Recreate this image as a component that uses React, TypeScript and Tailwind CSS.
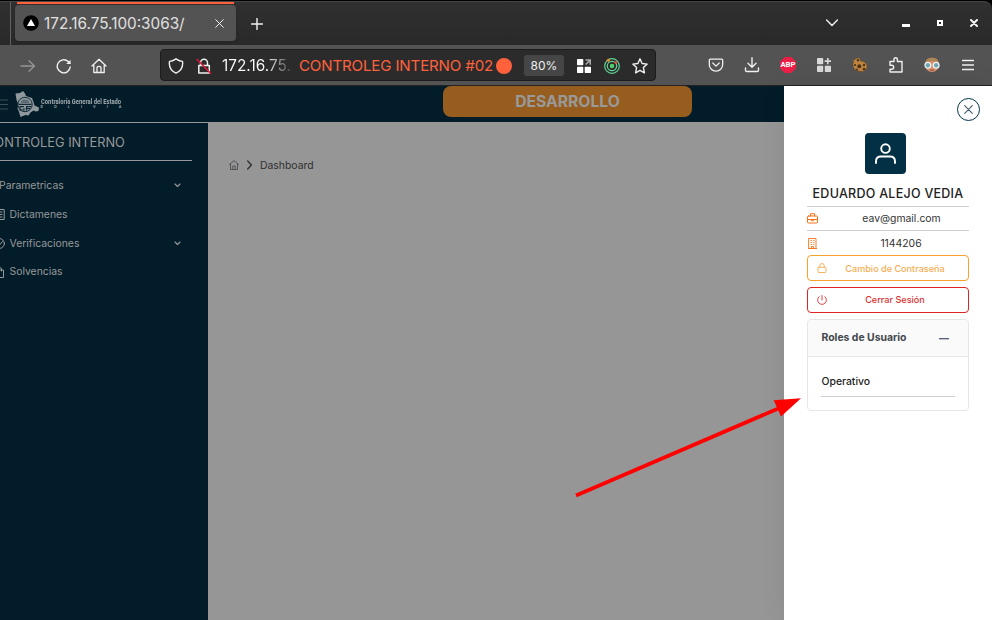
import React from "react";

type IconProps = { className?: string; children: React.ReactNode; box?: string; sw?: number };

function Icon({ className = "", children, box = "0 0 16 16", sw = 1.2 }: IconProps) {
  return (
    <svg viewBox={box} className={`block shrink-0 ${className}`} fill="none" stroke="currentColor" strokeWidth={sw} strokeLinecap="round" strokeLinejoin="round">
      {children}
    </svg>
  );
}

function Cell({ children, className = "" }: { children: React.ReactNode; className?: string }) {
  return <div className={`flex h-full w-9 shrink-0 items-center justify-center ${className}`}>{children}</div>;
}

function SmallCell({ children }: { children: React.ReactNode }) {
  return <div className="flex h-full w-7 shrink-0 items-center justify-center">{children}</div>;
}

function TabStrip() {
  return (
    <div className="flex h-[44px] shrink-0 rounded-tr-lg border-t border-[#454545] bg-gradient-to-b from-[#303030] to-[#292929] text-[#f2f2f2]">
      <div className="w-[11px] shrink-0 border-r border-[#606060]" />
      <div className="ml-[4px] flex w-[221px] shrink-0 flex-col">
        <div className="mx-[2px] h-[2px] bg-[#ff613d]" />
        <div className="mt-px flex h-[36px] items-center rounded bg-[#535353] shadow">
          <svg viewBox="0 0 16 16" className="ml-2 h-4 w-4 shrink-0">
            <circle cx="8" cy="8" r="7.8" fill="#000" />
            <path d="M8 4l4 7H4z" fill="#fff" />
          </svg>
          <span className="ml-[5px] w-[171px] pt-[2px] text-[15.3px] leading-none whitespace-nowrap text-[#e0e0e0]">172.16.75.100:3063/</span>
          <Icon className="h-[9px] w-[9px]" box="0 0 9 9" sw={1}>
            <path d="M.7.7l7.6 7.6M8.3.7L.7 8.3" />
          </Icon>
        </div>
      </div>
      <Icon className="mt-[16px] ml-[15px] h-3 w-3" box="0 0 12 12" sw={1.4}>
        <path d="M6 .5v11M.5 6h11" />
      </Icon>
      <div className="flex-1" />
      <Icon className="mt-[17px] mr-[64px] h-[8px] w-3" box="0 0 12 8" sw={1.4}>
        <path d="M.6 1L6 6.5 11.4 1" />
      </Icon>
      <div className="mt-[22px] h-[3px] w-2 bg-white" />
      <div className="mt-[18px] ml-[27px] h-[6px] w-[6px] border-2 border-white" />
      <Icon className="mt-[17px] mr-[14px] ml-[27px] h-2 w-2" box="0 0 8 8" sw={2}>
        <path d="M1 1l6 6M7 1L1 7" />
      </Icon>
    </div>
  );
}

function Toolbar() {
  return (
    <div className="flex h-[41px] shrink-0 border-b border-[#232323] bg-[#535353] pl-[10px] text-[#f0f0f0]">
      <Cell className="pt-px text-[#969696]">
        <Icon className="h-4 w-4" sw={1.3}><path d="M1 8h13.5M9 2.7L14.5 8 9 13.3" /></Icon>
      </Cell>
      <Cell className="pt-px">
        <Icon className="h-4 w-4" sw={1.4}>
          <path d="M14.2 9a6.5 6.5 0 1 1-2-5.4L14 5.2" />
          <path d="M14.5 1.8v4.3h-4.3z" fill="currentColor" stroke="none" />
        </Icon>
      </Cell>
      <Cell className="pt-px pr-[2px]">
        <Icon className="h-4 w-4" sw={1.3}>
          <path d="M1 8l7-6.8L15 8M2.8 7v7.5h10.4V7M6 14.3V10q0-1.6 2-1.6t2 1.6v4.3" />
        </Icon>
      </Cell>
      <div className="mt-[4px] ml-[42px] flex h-[32px] w-[496px] shrink-0 items-center rounded border border-[#1c1c1c] bg-[#2b2b2b] pt-px pl-px">
        <SmallCell>
          <Icon className="h-4 w-4" sw={1.4}><path d="M8 .8q3.5 2.4 6.5 2.6 1.2 8.2-6.5 11.8Q.3 11.6 1.5 3.4 4.5 3.2 8 .8z" /></Icon>
        </SmallCell>
        <SmallCell>
          <Icon className="h-4 w-4" sw={1.5}>
            <path d="M4.5 7.5V4.7a3.5 3.5 0 0 1 7 0v2.8M2.8 7.5h10.5V15H2.8z" />
            <path d="M1.2 1.5l13.3 13.8" stroke="#e2143c" />
          </Icon>
        </SmallCell>
        <span className="ml-[4px] w-[77px] bg-gradient-to-r from-white from-55% to-transparent to-95% bg-clip-text text-[15.4px] leading-5 whitespace-nowrap text-transparent">172.16.75.</span>
        <span className="w-[197px] text-[15.1px] leading-5 tracking-[-0.16px] whitespace-nowrap text-[#ff613d]">CONTROLEG INTERNO #02</span>
        <span className="h-4 w-4 shrink-0 rounded-full bg-[#ff613d]" />
        <span className="mx-[6px] ml-3 flex h-[21px] w-10 shrink-0 items-center justify-center rounded-[3px] bg-[#464646] text-[12px]">80%</span>
        <SmallCell>
          <svg viewBox="0 0 14 14" className="h-[14px] w-[14px]" fill="#fff">
            <rect width="6.3" height="6.3" rx=".7" /><rect y="7.7" width="6.3" height="6.3" rx=".7" /><rect x="7.7" y="7.7" width="6.3" height="6.3" rx=".7" />
            <path d="M8.5 1h4.7v4.7M13 1.2L8.7 5.5" stroke="#aaa" strokeWidth="1.6" fill="none" />
          </svg>
        </SmallCell>
        <SmallCell>
          <svg viewBox="0 0 16 16" className="h-4 w-4" fill="none" stroke="#61d394" strokeWidth="1.2">
            <circle cx="8" cy="8" r="7.3" /><circle cx="8" cy="8" r="4.7" /><circle cx="8" cy="8" r="2.3" fill="#4fd06e" stroke="none" />
            <circle cx="4.4" cy="2.2" r="1.5" fill="#f28c28" stroke="none" /><circle cx="11.8" cy="4.6" r="1.4" fill="#f0443c" stroke="none" />
          </svg>
        </SmallCell>
        <SmallCell>
          <Icon className="h-4 w-4" sw={1.4}><path d="M8 .8l2.1 4.7 5.1.6-3.800 3.500 1 5.200L8 12.300l-4.400 2.500 1-5.200L.8 6.100l5.100-.6z" /></Icon>
        </SmallCell>
      </div>
      <div className="mr-[6px] ml-auto flex">
        <Cell><Icon className="h-4 w-4" sw={1.3}><path d="M2.3 2.2h11.4q1 0 1 1v4.3a6.7 6.7 0 0 1-13.4 0V3.2q0-1 1-1zM4.8 6L8 9.1 11.2 6" /></Icon></Cell>
        <Cell><Icon className="h-4 w-4" sw={1.4}><path d="M8 .8V10M4 6.3L8 10.2l4-3.9M1.5 11v2.2q0 1.3 1.3 1.3h10.4q1.3 0 1.3-1.3V11" /></Icon></Cell>
        <Cell>
          <div className="flex h-4 w-4 items-center justify-center bg-[#ed1e45] font-['Roboto'] text-[7.8px] font-bold text-white [clip-path:polygon(30%_0,70%_0,100%_30%,100%_70%,70%_100%,30%_100%,0_70%,0_30%)]">ABP</div>
        </Cell>
        <Cell>
          <svg viewBox="0 0 14 14" className="h-[14px] w-[14px]" fill="#d9d9d9"><rect width="6.2" height="6.2" rx=".8" /><rect y="7.8" width="6.2" height="6.2" rx=".8" /><rect x="7.8" y="7.8" width="6.2" height="6.2" rx=".8" /><path d="M10 0h1.6v2.3H14v1.6h-2.4v2.3H10V3.9H7.7V2.3H10z" /></svg>
        </Cell>
        <Cell>
          <svg viewBox="0 0 16 16" className="h-4 w-4">
            <path d="M1 4Q4 .5 7 .8q1.500.8 1.500 3.200Q11 4 12.500 5.300q2.500 1.200 2.700 4.200-.5 3-3 4.500-5 1.500-9-1.200Q.3 10 .8 6.800q1.500-1 .2-2.800z" fill="#bd853f" stroke="#6b4624" strokeWidth=".6" />
            <g fill="#4b321d"><circle cx="6" cy="3.300" r="1.200" /><circle cx="3" cy="8" r="1.100" /><circle cx="7.300" cy="9.300" r="2" /><circle cx="12" cy="8" r="1.200" /><circle cx="12" cy="12" r="1.300" /><circle cx="5" cy="12.600" r="1" /></g>
          </svg>
        </Cell>
        <Cell><Icon className="h-4 w-4" sw={1.4}><path d="M2 7V4.500h4V2.800q0-2 1.700-2t1.700 2v1.700H14V15H2v-2.800h1.500q2.200 0 2.200-2t-2.200-2H2z" /></Icon></Cell>
        <Cell>
          <svg viewBox="0 0 16 16" className="h-4 w-4">
            <circle cx="8" cy="8" r="7" fill="#d88e6c" /><path d="M1.2 6.500Q1.500.5 8 .5t6.800 6Q11 4 8 4T1.200 6.500z" fill="#ad8454" />
            <g fill="#70a5b3" stroke="#f1f1f1" strokeWidth="1.300"><circle cx="3.900" cy="8.300" r="2.900" /><circle cx="12.100" cy="8.300" r="2.900" /></g><path d="M6 12.800q2 1 4 0" stroke="#914d3c" fill="none" />
          </svg>
        </Cell>
        <Cell><Icon className="h-3 w-3" box="0 0 12 12" sw={1.4}><path d="M.6 1.500h10.800M.6 6h10.800M.6 10.500h10.800" /></Icon></Cell>
      </div>
    </div>
  );
}

function Header() {
  return (
    <header className="flex h-[37px] shrink-0 border-b border-[#999999] bg-[#021c29]">
      <Icon className="mt-[13px] h-[11px] w-2 text-[#3a4e58]" box="0 0 8 11" sw={1}>
        <path d="M0 1h8M0 5.500h8M0 10h8" />
      </Icon>
      <svg viewBox="0 0 24 26" className="mt-[5px] ml-[7px] h-[26px] w-6 shrink-0">
        <path d="M.5 2.500L5 2 8 0l2 2.500 1 2.500 6 2 1.500 4 1 3.500 4.500 2-.5 3.500-3 .5-2-1-3 2-2 3-3-.5-5 2-1.500-5-1.500-3.500 1-4L1.500 9z" fill="#8f989c" />
        <circle cx="10" cy="13.500" r="7.200" fill="#8f989c" stroke="#112c38" strokeWidth="1" />
        <path d="M5.500 12q0-3.500 4.500-3.500t4.500 3.500z" fill="#5b6c74" />
        <path d="M3.500 13.300h13M9 15.700H5v3.300h4v-1.700M16 15.700h-4.500v4M11.500 17.700H15" fill="none" stroke="#112c38" strokeWidth="1.200" />
      </svg>
      <div className="mt-[11px] ml-[1.500px] w-[81px] text-[#99a4a9]">
        <div className="origin-left scale-x-[.76] text-[7.700px] leading-[9px] font-extrabold whitespace-nowrap font-['Roboto']">Contraloría General del Estado</div>
        <div className="flex justify-between text-[3.500px] leading-[3px] font-bold"><span>B</span><span>O</span><span>L</span><span>I</span><span>V</span><span>I</span><span>A</span></div>
      </div>
      <div className="mr-[92px] ml-auto flex h-[31px] w-[249px] items-center justify-center rounded-lg bg-[#965d1f] text-[15.700px] font-bold text-[#999]">DESARROLLO</div>
    </header>
  );
}

function Chevron() {
  return <Icon className="mr-[27.500px] ml-auto h-[5px] w-[7px]" box="0 0 7 5" sw={1.100}><path d="M1 1l2.500 2.500L6 1" /></Icon>;
}

function Sidebar() {
  return (
    <aside className="flex w-52 shrink-0 flex-col bg-[#021c29] text-[10.400px] text-[#999]">
      <div className="mr-4 flex h-[38px] shrink-0 items-center border-b border-[#999] pt-[2px]">
        <span className="-ml-[15px] text-[12.800px] whitespace-nowrap">CONTROLEG INTERNO</span>
      </div>
      <nav className="flex flex-col pt-[10px]">
        <div className="flex h-[29px] items-center"><span className="-ml-px">Parametricas</span><Chevron /></div>
        <div className="flex h-[29px] items-center">
          <Icon className="h-[11px] w-[5px]" box="5 0 5 11" sw={1}><path d="M1 .5h8.200v10H1zM3 3h4M3 5.500h4M3 8h4" /></Icon>
          <span className="ml-[4.500px]">Dictamenes</span>
        </div>
        <div className="flex h-[29px] items-center">
          <Icon className="h-[11px] w-[5px]" box="6 0 5 11" sw={1}><circle cx="5.500" cy="5.500" r="4.900" /><path d="M3 5.500L5 7.500 8.500 3.500" /></Icon>
          <span className="ml-[4.500px]">Verificaciones</span><Chevron />
        </div>
        <div className="flex h-[28px] items-center">
          <Icon className="h-[11px] w-[5px]" box="6 0 5 11" sw={1}><path d="M1 3h8.500v7.500H1zM7.500 4V2q0-1.500-2-1.500" /></Icon>
          <span className="ml-[4.500px]">Solvencias</span>
        </div>
      </nav>
    </aside>
  );
}

function UserPanel() {
  return (
    <section className="flex w-52 shrink-0 flex-col bg-white pr-[23px] pl-[23px] text-[10.400px] text-[#333] shadow-[0_0_24px_rgba(0,0,0,0.08)]">
      <div className="mt-[12px] -mr-[11px] flex h-[23px] w-[23px] shrink-0 items-center justify-center self-end rounded-full border border-[#043347] text-[#425b6c]">
        <Icon className="h-[9px] w-[9px]" box="0 0 9 9" sw={1.100}><path d="M.7.7l7.600 7.600M8.300.7L.7 8.300" /></Icon>
      </div>
      <div className="mt-[12px] ml-[58px] flex h-[41px] w-[41px] shrink-0 items-center justify-center rounded bg-[#033044] text-white">
        <Icon className="h-[21px] w-[21px]" box="0 0 21 21" sw={1.900}>
          <circle cx="10.500" cy="5.600" r="4.300" /><path d="M1 20v-1.500q0-5 5-5h9q5 0 5 5V20" />
        </Icon>
      </div>
      <div className="mt-[8px] flex h-[25px] shrink-0 items-center justify-center border-b border-[#cfcfcf] text-[12.500px] font-medium tracking-[.27px] whitespace-nowrap text-[#212121]">EDUARDO ALEJO VEDIA</div>
      <div className="flex h-[24px] shrink-0 items-center border-b border-[#cfcfcf]">
        <Icon className="h-[11px] w-[11px] text-[#f97316]" box="0 0 11 11" sw={1}><path d="M1.500 3h8q1 0 1 1v5q0 1-1 1h-8q-1 0-1-1V4q0-1 1-1zM3.500 3V.7h4V3M.5 6.500h10M4.500 6.500v1.200h2V6.500" /></Icon>
        <span className="flex-1 pl-[16px] text-center">eav@gmail.com</span>
      </div>
      <div className="flex h-[24px] shrink-0 items-center">
        <Icon className="ml-px h-[11px] w-[9px] text-[#f97316]" box="0 0 9 11" sw={.9}><path d="M1 .5h7v10H1zM0 10.500h9M3 2.500h.4M5.600 2.500H6M3 4.500h.4M5.600 4.500H6M3 6.500h.4M5.600 6.500H6M3.500 10.500v-2h2v2" /></Icon>
        <span className="flex-1 pt-[2px] pl-[16px] text-center">1144206</span>
      </div>
      <button className="flex h-[26px] shrink-0 items-center rounded border border-[#f9a12e] px-[9px] text-[9.100px] font-medium text-[#f6ad51]">
        <Icon className="h-[10px] w-[10px]" box="0 0 10 10" sw={.9}><path d="M2.800 4.300V2.700a2.200 2.200 0 0 1 4.400 0v1.600M1.700 4.300h6.600q.7 0 .7.700v3.800q0 .7-.7.700H1.700Q1 9.500 1 8.800V5q0-.7.7-.7z" /></Icon>
        <span className="flex-1 pt-px pl-[4px] text-center">Cambio de Contraseña</span>
      </button>
      <button className="mt-[6px] flex h-[26px] shrink-0 items-center rounded border border-[#dc2626] px-[9px] text-[9.100px] font-medium text-[#dc3030]">
        <Icon className="h-[10px] w-[10px]" box="0 0 10 10" sw={.9}><path d="M5 .5v4.500M2 1.700a4.400 4.400 0 1 0 6 0" /></Icon>
        <span className="flex-1 pl-[4px] text-center">Cerrar Sesión</span>
      </button>
      <div className="mt-[6px] flex h-[92px] shrink-0 flex-col overflow-hidden rounded border border-[#e5e7eb]">
        <div className="flex h-[37px] shrink-0 items-center border-b border-[#e5e7eb] bg-[#fafafa] pl-[13.500px] text-[10.400px] font-bold text-[#43484e]">
          <span className="pb-px">Roles de Usuario</span>
          <span className="mr-[19px] ml-auto h-px w-[10px] bg-[#526176] shadow-[0_.5px_0_#8792a0]" />
        </div>
        <div className="mx-[13px] flex h-[40px] items-end border-b border-[#cfcfcf] pb-[6px] pl-[.5px] text-[10.400px] leading-[17px] font-medium text-[#212121]">Operativo</div>
      </div>
    </section>
  );
}

export default function App() {
  return (
    <div className="relative flex h-[620px] w-[992px] flex-col overflow-hidden bg-black pt-px font-['Inter',sans-serif]">
      <TabStrip />
      <Toolbar />
      <div className="flex min-h-0 flex-1">
        <div className="flex min-w-0 flex-1 flex-col">
          <Header />
          <div className="flex min-h-0 flex-1">
            <Sidebar />
            <main className="flex-1 bg-[#969696] pt-[34px] pl-[21px] text-[10.400px] text-[#303030]">
              <div className="flex h-4 items-center">
                <Icon className="h-[10px] w-[10px] text-[#4a4d52]" box="0 0 10 10" sw={.9}><path d="M.5 4.500L5 .7l4.500 3.800M1.500 4v5.500h7V4M3.800 9.500V6h2.400v3.500" /></Icon>
                <Icon className="ml-[8px] h-[10px] w-[5px]" box="0 0 5 10" sw={1.300}><path d="M.7 1l3.700 4L.7 9" /></Icon>
                <span className="ml-[8px] pt-[2px]">Dashboard</span>
              </div>
            </main>
          </div>
        </div>
        <UserPanel />
      </div>
      <svg viewBox="0 0 250 110" className="pointer-events-none absolute top-[390px] left-[560px] h-[110px] w-[250px]" fill="#f00">
        <path d="M16 105.500L223 16.500" stroke="#f00" strokeWidth="3.800" />
        <path d="M241 8.300L213.700 10.300 221 26.500z" />
      </svg>
    </div>
  );
}
